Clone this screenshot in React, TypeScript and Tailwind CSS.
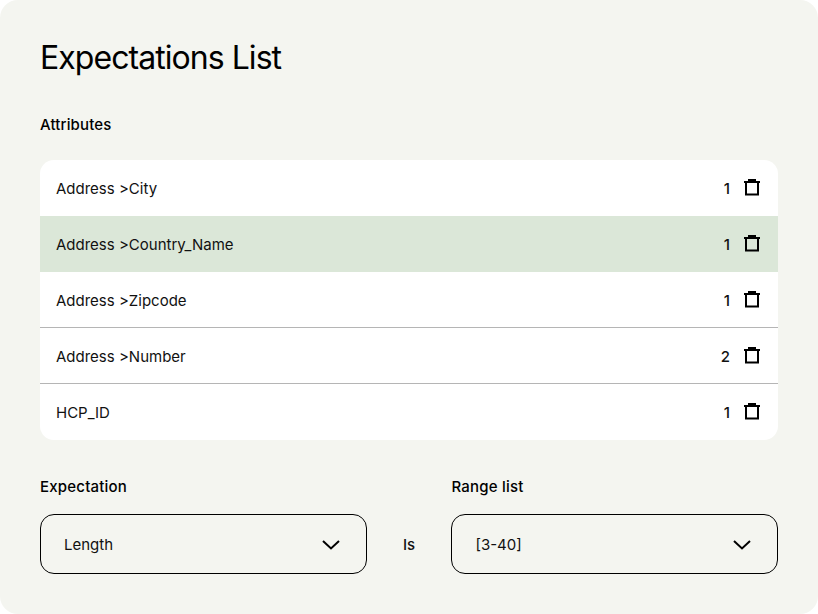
import React from 'react';

const rows = [
  { name: 'Address >City', count: 1, active: false, line: false },
  { name: 'Address >Country_Name', count: 1, active: true, line: false },
  { name: 'Address >Zipcode', count: 1, active: false, line: true },
  { name: 'Address >Number', count: 2, active: false, line: true },
  { name: 'HCP_ID', count: 1, active: false, line: false },
];

const TrashIcon = () => (
  <svg className="-mt-[2px]" width="16" height="18" viewBox="0 0 16 18" fill="none" stroke="#000" strokeWidth="2">
    <path d="M0 3H16" />
    <path d="M4 1H12" />
    <path d="M2 3V15.5H14V3" />
  </svg>
);

const Chevron = () => (
  <svg width="18" height="10" viewBox="0 0 18 10" fill="none" stroke="#000" strokeWidth="2">
    <path d="M1 1L9 8.5L17 1" />
  </svg>
);

const Dropdown = ({ label, value }: { label: string; value: string }) => (
  <div className="w-[326.5px]">
    <div className="h-5 text-[15px] leading-5 font-[450] text-black tracking-[0.2px]">{label}</div>
    <div className="mt-[17px] h-[60px] flex items-center justify-between pl-[23px] pr-[26px] pt-[2px] border border-black rounded-[14px] text-[15px] text-[#111]">
      <span>{value}</span>
      <Chevron />
    </div>
  </div>
);

export default function App() {
  return (
    <div className="w-[818px] h-[614px] bg-white font-['Inter',sans-serif]">
      <div className="w-full h-full bg-[#f4f5f0] rounded-[18px] px-10 pt-[38px]">
        <h1 className="text-[32px] leading-10 font-normal text-black tracking-[-0.95px]">Expectations List</h1>
        <div className="mt-[37px] h-5 text-[15px] leading-5 font-[450] text-black tracking-[0.15px]">Attributes</div>
        <div className="mt-[25px] bg-white rounded-[14px] overflow-hidden">
          {rows.map(r => (
            <div
              key={r.name}
              className={`h-14 flex items-center justify-between pl-4 pr-[18px] pt-[2px] text-[15px] text-[#111] ${r.active ? 'bg-[#dbe7d8]' : ''} ${r.line ? 'shadow-[inset_0_-1px_0_#b5b5b5]' : ''}`}
            >
              <span>{r.name}</span>
              <span className="flex items-center gap-[14px]">
                <span className="font-[450]">{r.count}</span>
                <TrashIcon />
              </span>
            </div>
          ))}
        </div>
        <div className="mt-[37px] flex items-end justify-between">
          <Dropdown label="Expectation" value="Length" />
          <div className="h-[60px] flex items-center pt-[2px] text-[15px] font-[450] text-[#111]">Is</div>
          <Dropdown label="Range list" value="[3-40]" />
        </div>
      </div>
    </div>
  );
}
